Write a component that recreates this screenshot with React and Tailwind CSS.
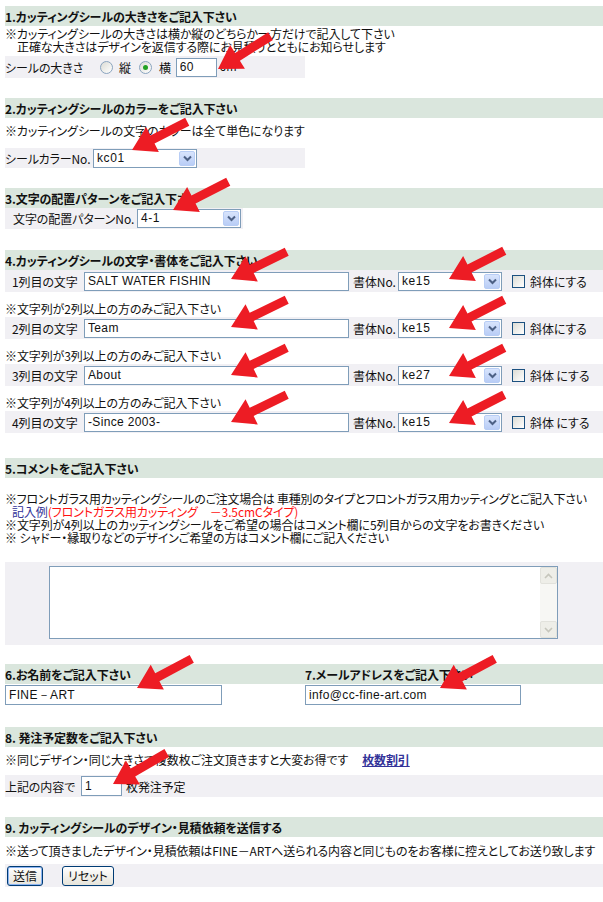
import React from 'react';

// Red annotation arrows pasted over the form (tip x/y in page px)
const arrows = [
  { x: 218, y: 69, a: 32 },
  { x: 132, y: 150, a: 27 },
  { x: 173, y: 210, a: 27 },
  { x: 231, y: 279, a: 26 },
  { x: 449, y: 279, a: 27 },
  { x: 231, y: 327, a: 26 },
  { x: 449, y: 328, a: 27 },
  { x: 231, y: 375, a: 26 },
  { x: 449, y: 376, a: 27 },
  { x: 231, y: 422, a: 26 },
  { x: 449, y: 423, a: 27 },
  { x: 137, y: 688, a: 28 },
  { x: 440, y: 688, a: 28 },
  { x: 113, y: 784, a: 30 },
];

function Arrow({ x, y, a }) {
  return (
    <svg
      className="absolute pointer-events-none"
      style={{ left: x - 2, top: y - 44 }}
      width="72"
      height="52"
      viewBox="0 0 72 52"
    >
      <polygon
        transform={`translate(2 44) rotate(${-a})`}
        points="0,0 23,-14 23,-4.5 62,-4.5 62,4.5 23,4.5 23,14"
        fill="#ed1c24"
      />
    </svg>
  );
}

function Header({ children }) {
  return (
    <div className="h-[20px] bg-[#dae6dd] flex items-center font-bold">{children}</div>
  );
}

function Radio({ checked, className = '' }) {
  return (
    <span
      className={`w-[13px] h-[13px] rounded-full border border-[#8aa4bf] bg-gradient-to-br from-[#dcdcd5] to-white flex items-center justify-center shrink-0 ${className}`}
    >
      {checked && <span className="w-[5px] h-[5px] rounded-full bg-[#21a121]" />}
    </span>
  );
}

function Check({ className = '' }) {
  return (
    <span
      className={`w-[13px] h-[13px] border border-[#1c5180] bg-gradient-to-br from-[#dcdcd5] to-white shrink-0 ${className}`}
    />
  );
}

function Select({ value, className = '' }) {
  return (
    <div className={`flex h-[19px] border border-[#7f9db9] bg-white shrink-0 ${className}`}>
      <span className="flex-1 pl-[3px] flex items-center font-[Liberation_Sans,sans-serif] tracking-[0.6px]">
        {value}
      </span>
      <span className="w-[16px] m-[1px] rounded-[2px] border border-[#b8cdf5] bg-gradient-to-b from-[#d8e4fc] to-[#b9cdf6] flex items-center justify-center">
        <svg width="9" height="7" viewBox="0 0 9 7">
          <path d="M1 1.5 L4.5 5 L8 1.5" fill="none" stroke="#4d6185" strokeWidth="2" />
        </svg>
      </span>
    </div>
  );
}

function TextBox({ value, className = '' }) {
  return (
    <input
      defaultValue={value}
      className={`h-[19px] border border-[#7f9db9] bg-white px-[3px] text-[12px] font-[Liberation_Sans,sans-serif] tracking-[0.35px] outline-none shrink-0 ${className}`}
    />
  );
}

function FontRow({ n, text, font, italic }) {
  return (
    <div className="h-[22px] bg-[#f1f0f4] flex items-center">
      <span className="w-[79px] pl-[7px] shrink-0">{n}列目の文字</span>
      <TextBox value={text} className="w-[265px]" />
      <span className="w-[49px] pl-[4px] shrink-0">書体No.</span>
      <Select value={font} className="w-[104px]" />
      <Check className="ml-[10px]" />
      <span className="ml-[5px]">{italic}</span>
    </div>
  );
}

export default function App() {
  return (
    <div className="relative w-[603px] h-[902px] overflow-hidden bg-white pl-[5px] text-[12px] leading-[13px] tracking-[-0.1px] text-[#111] font-[Noto_Sans_CJK_JP,sans-serif] [font-feature-settings:'palt']">
      {/* 1 */}
      <div className="pt-[6px]">
        <Header>1.カッティングシールの大きさをご記入下さい</Header>
        <p className="mt-[1px]">※カッティングシールの大きさは横か縦のどちらか一方だけで記入して下さい</p>
        <p className="pl-[12px]">正確な大きさはデザインを返信する際にお見積りとともにお知らせします</p>
        <div className="mt-[3px] h-[22px] w-[300px] bg-[#f1f0f4] flex items-center">
          <span className="w-[95px] shrink-0">シールの大きさ</span>
          <Radio />
          <span className="ml-[6px]">縦</span>
          <Radio checked className="ml-[8px]" />
          <span className="ml-[7px]">横</span>
          <TextBox value="60" className="ml-[5px] w-[41px]" />
          <span className="ml-[3px] font-[Liberation_Sans,sans-serif] tracking-[0.8px]">cm</span>
        </div>
      </div>

      {/* 2 */}
      <div className="mt-[20px]">
        <Header>2.カッティングシールのカラーをご記入下さい</Header>
        <p className="mt-[6px]">※カッティングシールの文字のカラーは全て単色になります</p>
        <div className="mt-[11px] h-[20px] w-[300px] bg-[#f1f0f4] flex items-center">
          <span className="w-[88px] shrink-0">シールカラーNo.</span>
          <Select value="kc01" className="w-[104px]" />
        </div>
      </div>

      {/* 3 */}
      <div className="mt-[20px]">
        <Header>3.文字の配置パターンをご記入下さい</Header>
        <div className="h-[21px] w-[238px] bg-[#f1f0f4] flex items-center">
          <span className="w-[132px] pl-[8px] shrink-0">文字の配置パターンNo.</span>
          <Select value="4-1" className="w-[104px]" />
        </div>
      </div>

      {/* 4 */}
      <div className="mt-[21px]">
        <Header>4.カッティングシールの文字・書体をご記入下さい</Header>
        <FontRow n="1" text="SALT WATER FISHIN" font="ke15" italic="斜体にする" />
        <p className="mt-[10px]">※文字列が2列以上の方のみご記入下さい</p>
        <div className="mt-[2px]">
          <FontRow n="2" text="Team" font="ke15" italic="斜体にする" />
        </div>
        <p className="mt-[10px]">※文字列が3列以上の方のみご記入下さい</p>
        <div className="mt-[2px]">
          <FontRow n="3" text="About" font="ke27" italic="斜体 にする" />
        </div>
        <p className="mt-[10px]">※文字列が4列以上の方のみご記入下さい</p>
        <div className="mt-[2px]">
          <FontRow n="4" text="-Since 2003-" font="ke15" italic="斜体 にする" />
        </div>
      </div>

      {/* 5 */}
      <div className="mt-[25px]">
        <Header>5.コメントをご記入下さい</Header>
        <div className="mt-[14px]">
          <p className="whitespace-nowrap tracking-[-0.25px]">※フロントガラス用カッティングシールのご注文場合は 車種別のタイプとフロントガラス用カッティングとご記入下さい</p>
          <p className="pl-[7px]">
            <span className="text-[#333399]">記入例</span>
            <span className="text-[#ff1111]">(フロントガラス用カッティング　－3.5cmCタイプ)</span>
          </p>
          <p>※文字列が4列以上のカッティングシールをご希望の場合はコメント欄に5列目からの文字をお書きください</p>
          <p>※ シャドー・縁取りなどのデザインご希望の方はコメント欄にご記入ください</p>
        </div>
        <div className="mt-[18px] h-[83px] bg-[#f1f0f4] pt-[4px] pl-[44px]">
          <div className="w-[509px] h-[73px] border border-[#7f9db9] bg-white flex justify-end">
            <div className="w-[17px] bg-[#f7f7f4] flex flex-col justify-between">
              <span className="h-[17px] border border-[#e2e2dc] rounded-[2px] bg-[#eeeee8] flex items-center justify-center">
                <svg width="9" height="6" viewBox="0 0 9 6">
                  <path d="M1 5 L4.5 1.5 L8 5" fill="none" stroke="#c6c6bc" strokeWidth="1.6" />
                </svg>
              </span>
              <span className="h-[17px] border border-[#e2e2dc] rounded-[2px] bg-[#eeeee8] flex items-center justify-center">
                <svg width="9" height="6" viewBox="0 0 9 6">
                  <path d="M1 1 L4.5 4.5 L8 1" fill="none" stroke="#c6c6bc" strokeWidth="1.6" />
                </svg>
              </span>
            </div>
          </div>
        </div>
      </div>

      {/* 6 / 7 */}
      <div className="mt-[19px]">
        <div className="h-[20px] bg-[#dae6dd] grid grid-cols-[300px_1fr] items-center font-bold">
          <span>6.お名前をご記入下さい</span>
          <span>7.メールアドレスをご記入下さい</span>
        </div>
        <div className="mt-[1px] grid grid-cols-[300px_1fr]">
          <TextBox value="FINE－ART" className="w-[217px] h-[20px]" />
          <TextBox value="info@cc-fine-art.com" className="w-[216px] h-[20px]" />
        </div>
      </div>

      {/* 8 */}
      <div className="mt-[22px]">
        <Header>8. 発注予定数をご記入下さい</Header>
        <p className="mt-[6px] flex">
          <span>※同じデザイン・同じ大きさで複数枚ご注文頂きますと大変お得です</span>
          <a href="#" className="ml-[14px] font-bold underline text-[#333399]">枚数割引</a>
        </p>
        <div className="mt-[9px] h-[22px] bg-[#f1f0f4] flex items-center">
          <span className="w-[76px] shrink-0">上記の内容で</span>
          <TextBox value="1" className="w-[41px] h-[20px]" />
          <span className="ml-[4px]">枚発注予定</span>
        </div>
      </div>

      {/* 9 */}
      <div className="mt-[20px]">
        <Header>9. カッティングシールのデザイン・見積依頼を送信する</Header>
        <p className="mt-[7px] whitespace-nowrap">※送って頂きましたデザイン・見積依頼はFINE－ARTへ送られる内容と同じものをお客様に控えとしてお送り致します</p>
        <div className="mt-[7px] h-[23px] bg-[#f1f0f4] flex items-center">
          <button className="ml-[2px] w-[36px] h-[20px] rounded-[3px] border border-[#003c74] bg-gradient-to-b from-white to-[#e6e4da] shadow-[inset_0_0_0_1px_#8cb4f2] text-[12px] leading-none">
            送信
          </button>
          <button className="ml-[19px] w-[52px] h-[20px] rounded-[3px] border border-[#003c74] bg-gradient-to-b from-white to-[#e6e4da] text-[12px] leading-none">
            リセット
          </button>
        </div>
      </div>

      {arrows.map((ar, i) => (
        <Arrow key={i} {...ar} />
      ))}
    </div>
  );
}
